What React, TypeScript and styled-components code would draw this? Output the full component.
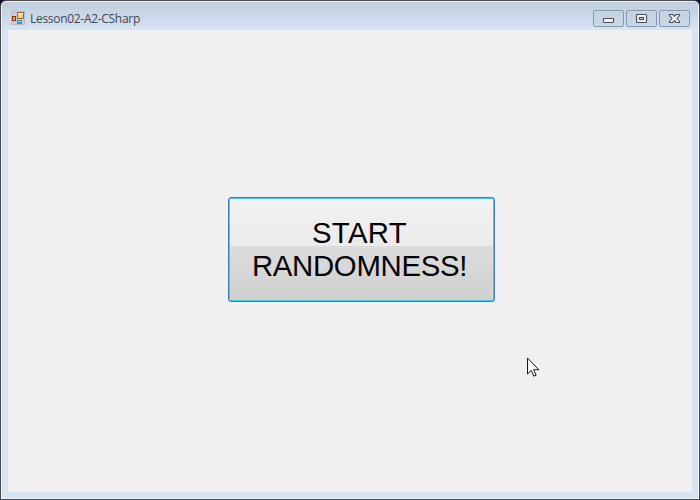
import React from "react";
import styled, { createGlobalStyle } from "styled-components";

const GlobalStyle = createGlobalStyle`
  html, body { margin: 0; padding: 0; background: #0b0a30; overflow: hidden; }
  * { box-sizing: border-box; }
`;

const Window = styled.main`
  width: 700px;
  height: 500px;
  display: flex;
  flex-direction: column;
  border: 1px solid #4a4a50;
  border-radius: 6px 6px 0 0;
  padding: 0 6px 6px;
  background: linear-gradient(#bfcddc 0, #c9d7e5 14px, #d7e4f2 29px, #d7e4f2 100%);
  box-shadow: inset 0 0 0 1px #e9f1f9;
`;

const TitleBar = styled.header`
  height: 29px;
  flex: none;
  display: flex;
  align-items: flex-start;
  padding: 9px 3px 0 4px;
`;

const Title = styled.h1`
  margin: 0 auto 0 5px;
  padding-top: 1px;
  font: 400 12px/16px "Open Sans", "Noto Sans", sans-serif;
  letter-spacing: -0.3px;
  color: #42484f;
  white-space: nowrap;
`;

const AppIcon = styled.svg`
  display: block;
  flex: none;
  margin-top: 1px;
`;

const Controls = styled.div`
  display: flex;
  gap: 2px;
`;

const ControlButton = styled.button`
  width: 31px;
  height: 17px;
  padding: 0;
  display: flex;
  align-items: center;
  justify-content: center;
  border: 1px solid #8497b5;
  border-radius: 2px;
  background: linear-gradient(#c3d0de, #cbd9e7);
  box-shadow: inset 0 0 0 1px #cbd8e6;
`;

const Client = styled.section`
  flex: 1;
  margin: 0 1px 1px;
  display: flex;
  align-items: flex-start;
  padding: 167px 0 0 220px;
  background: #f0f0f0;
`;

const StartButton = styled.button`
  width: 267px;
  height: 105px;
  padding: 0 4px 2px 0;
  border: 1px solid #3c7fb1;
  border-radius: 3px;
  background: linear-gradient(#f2f2f2 0, #ebebeb 48px, #dddddd 48px, #cfcfcf 100%);
  box-shadow: inset 0 0 0 1px #46c8f0;
  font: 400 29.33px/33px "Liberation Sans", Arial, sans-serif;
  color: #000;
`;

const LabelLine = styled.span<{ $tracking: number }>`
  display: block;
  letter-spacing: ${(p) => p.$tracking}px;
`;

const Pointer = styled.svg`
  position: absolute;
  left: 527px;
  top: 357px;
`;

export default function App() {
  return (
    <>
      <GlobalStyle />
      <Window>
        <TitleBar>
          <AppIcon width="14" height="14" viewBox="0 0 14 14" shapeRendering="crispEdges">
            <path d="M.5.5h13v13H.5z" fill="#c6cdd4" stroke="#b4bbc2" />
            <path d="M6.5 1.5h6v6h-6z" fill="#f0cf87" stroke="#a66b1e" />
            <path d="M7 2h5v2H7z" fill="#f8e6b7" />
            <path d="M1.5 5.5h3v4h-3z" fill="#e3a16c" stroke="#873407" />
            <path d="M6 9h5v4H6z" fill="#4b8ec4" />
            <path d="M7 10h3v1H7z" fill="#a2d1ee" />
          </AppIcon>
          <Title>Lesson02-A2-CSharp</Title>
          <Controls>
            <ControlButton aria-label="Minimize">
              <svg width="13" height="13" viewBox="0 0 13 13">
                <rect x="1.5" y="6.5" width="10" height="4" rx="0.8" fill="#f3f3f3" stroke="#4c4e60" strokeWidth="1.1" />
              </svg>
            </ControlButton>
            <ControlButton aria-label="Maximize">
              <svg width="13" height="13" viewBox="0 0 13 13">
                <rect x="1.5" y="2.5" width="10" height="8" rx="0.8" fill="#f3f3f3" stroke="#4c4e60" strokeWidth="1.1" />
                <rect x="4.5" y="5.5" width="4" height="2" fill="#c5d1de" stroke="#4c4e60" strokeWidth="1.1" />
              </svg>
            </ControlButton>
            <ControlButton aria-label="Close">
              <svg width="13" height="13" viewBox="0 0 13 13">
                <path d="M1.5 2.5h3.2l1.8 1.8 1.8-1.8h3.2v1L8.9 6.5l2.6 3v1H8.3L6.5 8.7l-1.8 1.8H1.5v-1l2.6-3-2.6-3z" fill="#f3f3f3" stroke="#4c4e60" strokeWidth="1.1" strokeLinejoin="round" />
              </svg>
            </ControlButton>
          </Controls>
        </TitleBar>
        <Client>
          <StartButton>
            <LabelLine $tracking={0.35}>START</LabelLine>
            <LabelLine $tracking={-0.3}>RANDOMNESS!</LabelLine>
          </StartButton>
        </Client>
      </Window>
      <Pointer width="13" height="21" viewBox="0 0 13 21" aria-hidden="true">
        <path d="M.5 1v16l3.8-3.6 2.5 5.8 2.3-1-2.5-5.5h5.2z" fill="#fff" stroke="#151525" />
      </Pointer>
    </>
  );
}
